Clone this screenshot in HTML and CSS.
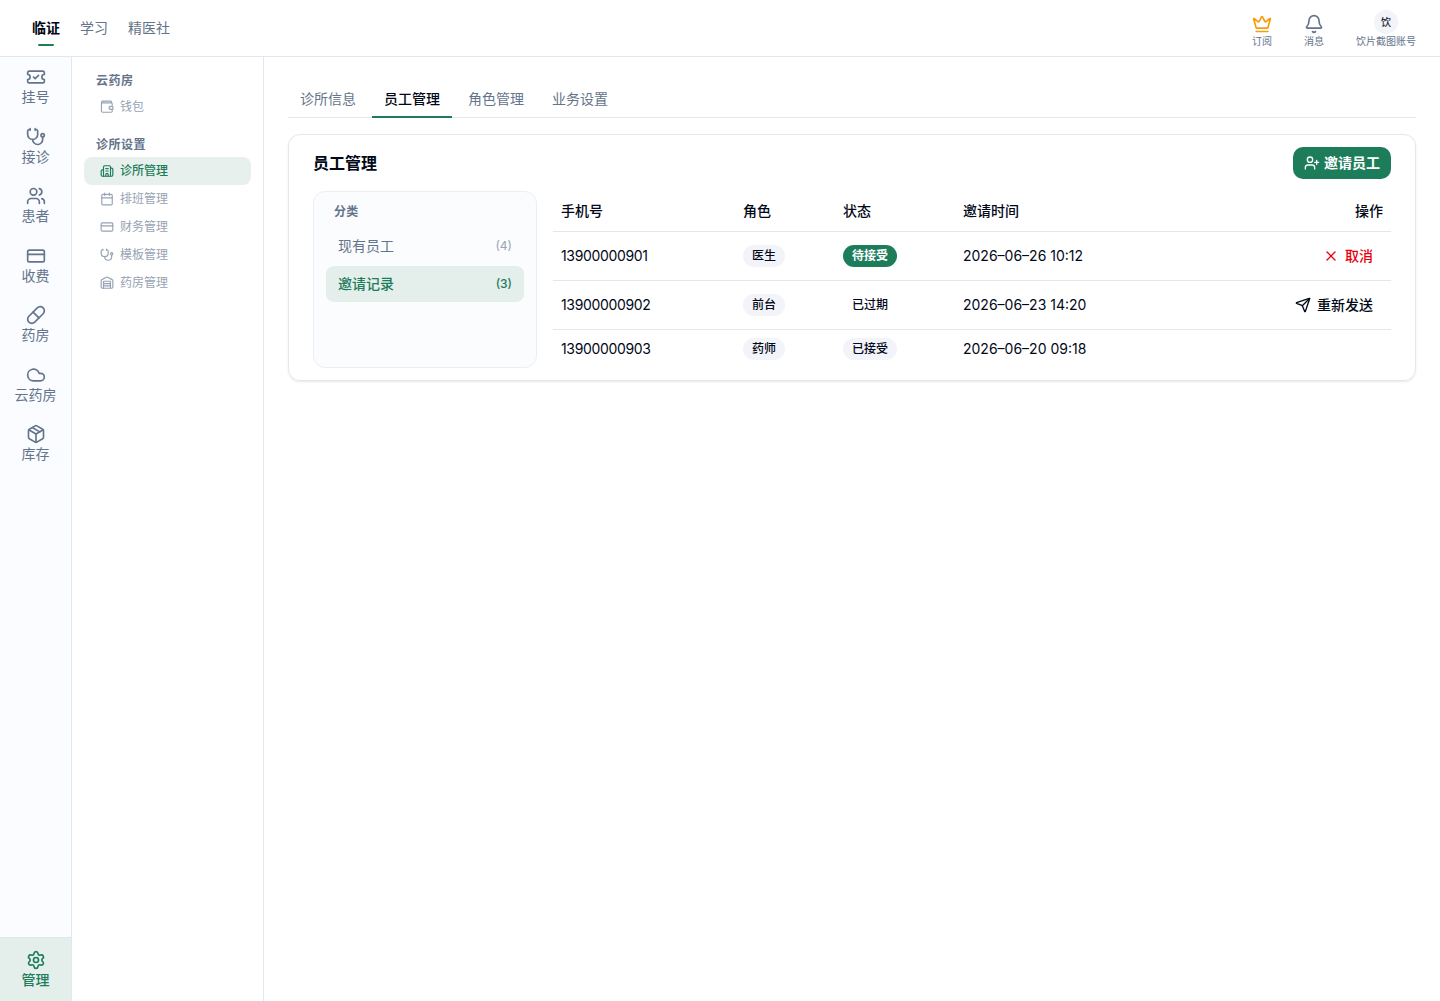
FILE: index.html
```html
<!DOCTYPE html>
<html lang="zh-CN">
<head>
    <meta charset="UTF-8">
    <meta name="viewport" content="width=device-width, initial-scale=1.0">
    <title>员工管理</title>
    <link rel="stylesheet" href="styles.css">
</head>
<body>
    <!-- Shared icons -->
    <svg class="sprite">
        <symbol id="ticket" viewBox="0 0 24 24"><path d="M2 9a3 3 0 0 1 0 6v2a2 2 0 0 0 2 2h16a2 2 0 0 0 2-2v-2a3 3 0 0 1 0-6V7a2 2 0 0 0-2-2H4a2 2 0 0 0-2 2Z"/><path d="m9 12 2 2 4-4"/></symbol>
        <symbol id="stethoscope" viewBox="0 0 24 24"><path d="M11 2v2M5 2v2M5 3H4a2 2 0 0 0-2 2v4a6 6 0 0 0 12 0V5a2 2 0 0 0-2-2h-1"/><path d="M8 15a6 6 0 0 0 12 0v-3"/><circle cx="20" cy="10" r="2"/></symbol>
        <symbol id="users" viewBox="0 0 24 24"><path d="M16 21v-2a4 4 0 0 0-4-4H6a4 4 0 0 0-4 4v2"/><circle cx="9" cy="7" r="4"/><path d="M22 21v-2a4 4 0 0 0-3-3.87M16 3.130a4 4 0 0 1 0 7.750"/></symbol>
        <symbol id="card" viewBox="0 0 24 24"><rect x="2" y="5" width="20" height="14" rx="2"/><path d="M2 10h20"/></symbol>
        <symbol id="pill" viewBox="0 0 24 24"><path d="m10.5 20.5 10-10a4.95 4.95 0 1 0-7-7l-10 10a4.95 4.95 0 1 0 7 7Z"/><path d="m8.5 8.5 7 7"/></symbol>
        <symbol id="cloud" viewBox="0 0 24 24"><path d="M17.5 19H9a7 7 0 1 1 6.71-9h1.79a4.5 4.5 0 1 1 0 9Z"/></symbol>
        <symbol id="package" viewBox="0 0 24 24"><path d="M11 21.73a2 2 0 0 0 2 0l7-4A2 2 0 0 0 21 16V8a2 2 0 0 0-1-1.73l-7-4a2 2 0 0 0-2 0l-7 4A2 2 0 0 0 3 8v8a2 2 0 0 0 1 1.73z"/><path d="M12 22V12"/><path d="M3.29 7 12 12l8.71-5"/><path d="m7.5 4.27 9 5.15"/></symbol>
        <symbol id="settings" viewBox="0 0 24 24"><path d="M9.671 4.136a2.34 2.34 0 0 1 4.659 0 2.34 2.34 0 0 0 3.319 1.915 2.34 2.34 0 0 1 2.33 4.033 2.34 2.34 0 0 0 0 3.831 2.34 2.34 0 0 1-2.33 4.033 2.34 2.34 0 0 0-3.319 1.915 2.34 2.34 0 0 1-4.659 0 2.34 2.34 0 0 0-3.32-1.915 2.34 2.34 0 0 1-2.33-4.033 2.34 2.34 0 0 0 0-3.831A2.34 2.34 0 0 1 6.35 6.051a2.34 2.34 0 0 0 3.319-1.915"/><circle cx="12" cy="12" r="3"/></symbol>
        <symbol id="wallet" viewBox="0 0 24 24"><path d="M17 14h.01"/><path d="M21 8.5V7a2 2 0 0 0-2-2H4.500a1.500 1.500 0 0 1 0-3H18a2 2 0 0 1 2 2v1M2.500 4v15a2 2 0 0 0 2 2H19a2 2 0 0 0 2-2v-1.500"/><path d="M22 11v5h-4a2.500 2.500 0 0 1 0-5z"/></symbol>
        <symbol id="building" viewBox="0 0 24 24"><path d="M10 12h4M10 8h4M14 21v-3a2 2 0 0 0-4 0v3"/><path d="M6 10H4a2 2 0 0 0-2 2v7a2 2 0 0 0 2 2h16a2 2 0 0 0 2-2V9a2 2 0 0 0-2-2h-2"/><path d="M6 21V5a2 2 0 0 1 2-2h8a2 2 0 0 1 2 2v16"/></symbol>
        <symbol id="calendar" viewBox="0 0 24 24"><path d="M8 2v4M16 2v4M3 10h18"/><rect x="3" y="4" width="18" height="18" rx="2"/></symbol>
        <symbol id="warehouse" viewBox="0 0 24 24"><path d="M18 21V10a1 1 0 0 0-1-1H7a1 1 0 0 0-1 1v11"/><path d="M22 19a2 2 0 0 1-2 2H4a2 2 0 0 1-2-2V8a2 2 0 0 1 1.132-1.803l7.950-3.974a2 2 0 0 1 1.837 0l7.948 3.974A2 2 0 0 1 22 8z"/><path d="M6 13h12M6 17h12"/></symbol>
        <symbol id="crown" viewBox="0 0 24 24"><path d="M11.562 3.266a.5.5 0 0 1 .876 0L15.390 8.870a1 1 0 0 0 1.516.294L21.183 5.500a.5.5 0 0 1 .798.519l-2.834 10.246a1 1 0 0 1-.956.734H5.810a1 1 0 0 1-.957-.734L2.020 6.020a.5.5 0 0 1 .798-.519l4.276 3.664a1 1 0 0 0 1.516-.294z"/><path d="M5 21h14"/></symbol>
        <symbol id="bell" viewBox="0 0 24 24"><path d="M10.268 21a2 2 0 0 0 3.464 0"/><path d="M3.262 15.326A1 1 0 0 0 4 17h16a1 1 0 0 0 .74-1.673C19.410 13.956 18 12.499 18 8A6 6 0 0 0 6 8c0 4.499-1.411 5.956-2.738 7.326"/></symbol>
        <symbol id="user-plus" viewBox="0 0 24 24"><path d="M16 21v-2a4 4 0 0 0-4-4H6a4 4 0 0 0-4 4v2"/><circle cx="9" cy="7" r="4"/><path d="M19 8v6M22 11h-6"/></symbol>
        <symbol id="close" viewBox="0 0 24 24"><path d="M18 6 6 18M6 6l12 12"/></symbol>
        <symbol id="send" viewBox="0 0 24 24"><path d="M14.536 21.686a.5.5 0 0 0 .937-.024l6.500-19a.496.496 0 0 0-.635-.635l-19 6.500a.5.5 0 0 0-.024.937l7.930 3.180a2 2 0 0 1 1.112 1.110z"/><path d="m21.854 2.147-10.940 10.939"/></symbol>
    </svg>

    <header class="topbar">
        <nav class="top-nav">
            <a class="active">临证</a>
            <a>学习</a>
            <a>精医社</a>
        </nav>
        <div class="top-actions">
            <a class="top-action"><svg class="icon crown"><use href="#crown"/></svg><span>订阅</span></a>
            <a class="top-action"><svg class="icon"><use href="#bell"/></svg><span>消息</span></a>
            <a class="top-action account"><span class="avatar">饮</span><span>饮片截图账号</span></a>
        </div>
    </header>

    <div class="layout">
        <nav class="rail">
            <a class="rail-item"><svg class="icon"><use href="#ticket"/></svg>挂号</a>
            <a class="rail-item"><svg class="icon"><use href="#stethoscope"/></svg>接诊</a>
            <a class="rail-item"><svg class="icon"><use href="#users"/></svg>患者</a>
            <a class="rail-item"><svg class="icon"><use href="#card"/></svg>收费</a>
            <a class="rail-item"><svg class="icon"><use href="#pill"/></svg>药房</a>
            <a class="rail-item"><svg class="icon"><use href="#cloud"/></svg>云药房</a>
            <a class="rail-item"><svg class="icon"><use href="#package"/></svg>库存</a>
            <a class="rail-item active"><svg class="icon"><use href="#settings"/></svg>管理</a>
        </nav>

        <aside class="sidebar">
            <section>
                <h2>云药房</h2>
                <a class="side-item"><svg class="icon"><use href="#wallet"/></svg>钱包</a>
            </section>
            <section>
                <h2>诊所设置</h2>
                <a class="side-item active"><svg class="icon"><use href="#building"/></svg>诊所管理</a>
                <a class="side-item"><svg class="icon"><use href="#calendar"/></svg>排班管理</a>
                <a class="side-item"><svg class="icon"><use href="#card"/></svg>财务管理</a>
                <a class="side-item"><svg class="icon"><use href="#stethoscope"/></svg>模板管理</a>
                <a class="side-item"><svg class="icon"><use href="#warehouse"/></svg>药房管理</a>
            </section>
        </aside>

        <main>
            <nav class="tabs">
                <a>诊所信息</a>
                <a class="active">员工管理</a>
                <a>角色管理</a>
                <a>业务设置</a>
            </nav>

            <section class="card">
                <div class="card-header">
                    <h1>员工管理</h1>
                    <button class="invite"><svg class="icon"><use href="#user-plus"/></svg>邀请员工</button>
                </div>
                <div class="card-body">
                    <div class="categories">
                        <h3>分类</h3>
                        <a class="category"><span>现有员工</span><span class="count">(4)</span></a>
                        <a class="category active"><span>邀请记录</span><span class="count">(3)</span></a>
                    </div>
                    <table>
                        <colgroup>
                            <col class="col-phone">
                            <col class="col-role">
                            <col class="col-status">
                            <col>
                            <col class="col-action">
                        </colgroup>
                        <thead>
                            <tr><th>手机号</th><th>角色</th><th>状态</th><th>邀请时间</th><th class="right">操作</th></tr>
                        </thead>
                        <tbody>
                            <tr>
                                <td class="phone">13900000901</td>
                                <td><span class="badge">医生</span></td>
                                <td><span class="badge primary">待接受</span></td>
                                <td>2026–06–26 10:12</td>
                                <td class="right"><button class="ghost danger"><svg class="icon"><use href="#close"/></svg>取消</button></td>
                            </tr>
                            <tr>
                                <td class="phone">13900000902</td>
                                <td><span class="badge">前台</span></td>
                                <td><span class="badge plain">已过期</span></td>
                                <td>2026–06–23 14:20</td>
                                <td class="right"><button class="ghost"><svg class="icon"><use href="#send"/></svg>重新发送</button></td>
                            </tr>
                            <tr>
                                <td class="phone">13900000903</td>
                                <td><span class="badge">药师</span></td>
                                <td><span class="badge">已接受</span></td>
                                <td>2026–06–20 09:18</td>
                                <td></td>
                            </tr>
                        </tbody>
                    </table>
                </div>
            </section>
        </main>
    </div>
</body>
</html>
```
FILE: styles.css
```css
* {
    box-sizing: border-box;
}

body {
    margin: 0;
    height: 100vh;
    display: flex;
    flex-direction: column;
    overflow: hidden;
    font-family: Inter, "Noto Sans CJK SC", sans-serif;
    font-size: 14px;
    line-height: 20px;
    color: #020817;
    background: #fff;
}

h1, h2, h3 {
    margin: 0;
    font-weight: 600;
}

button {
    font: inherit;
    border: none;
    cursor: pointer;
}

.sprite {
    display: none;
}

.icon {
    width: 20px;
    height: 20px;
    flex-shrink: 0;
    fill: none;
    stroke: currentColor;
    stroke-width: 2;
    stroke-linecap: round;
    stroke-linejoin: round;
}

/* Top bar */
.topbar {
    height: 57px;
    flex-shrink: 0;
    display: flex;
    justify-content: space-between;
    padding: 0 24px 0 32px;
    border-bottom: 1px solid #e2e8f0;
}

.top-nav {
    display: flex;
    align-items: center;
    gap: 20px;
    color: #64748b;
}

.top-nav .active {
    position: relative;
    color: #020817;
    font-weight: 600;
}

.top-nav .active::after {
    content: "";
    position: absolute;
    left: 50%;
    bottom: -8px;
    width: 16px;
    height: 2px;
    margin-left: -8px;
    border-radius: 2px;
    background: #1d7d5b;
}

.top-actions {
    display: flex;
    gap: 32px;
    padding-top: 14px;
    font-size: 10px;
    line-height: 15px;
    color: #64748b;
}

.top-action {
    display: flex;
    flex-direction: column;
    align-items: center;
}

.account {
    margin-top: -4px;
}

.crown {
    color: #f99c0b;
}

.avatar {
    width: 24px;
    height: 24px;
    border-radius: 50%;
    background: #f2f4f9;
    color: #1e293b;
    font-weight: 500;
    line-height: 24px;
    text-align: center;
}

/* Page columns */
.layout {
    flex: 1;
    display: flex;
    min-height: 0;
}

.rail {
    width: 72px;
    flex-shrink: 0;
    display: flex;
    flex-direction: column;
    border-right: 1px solid #e2e8f0;
    background: #fafcff;
}

.rail-item {
    display: flex;
    flex-direction: column;
    align-items: center;
    gap: 1px;
    padding: 10px 0 11px;
    line-height: 17.5px;
    color: #64748b;
}

.rail-item.active {
    height: 64px;
    margin-top: auto;
    padding-top: 12px;
    border-top: 1px solid #e0e9ea;
    background: #e4eeeb;
    color: #1d7d5b;
    font-weight: 500;
}

.sidebar {
    width: 192px;
    flex-shrink: 0;
    padding: 12px;
    border-right: 1px solid #e2e8f0;
}

.sidebar section {
    margin-bottom: 12px;
}

.sidebar h2 {
    padding-left: 12px;
    font-size: 12px;
    line-height: 24px;
    letter-spacing: 0.5px;
    color: #64748b;
}

.side-item {
    display: flex;
    align-items: center;
    gap: 6px;
    height: 28px;
    padding-left: 16px;
    border-radius: 8px;
    font-size: 12px;
    color: #97a3b5;
}

.side-item .icon {
    width: 14px;
    height: 14px;
}

.side-item.active {
    background: #e8f0ed;
    color: #1d7d5b;
    font-weight: 500;
}

/* Main content */
main {
    flex: 1;
    padding: 24px;
}

.tabs {
    display: flex;
    gap: 4px;
    height: 37px;
    margin-bottom: 16px;
    border-bottom: 1px solid #e2e8f0;
}

.tabs a {
    height: 37px;
    padding: 8px 12px 0;
    color: #64748b;
}

.tabs .active {
    border-bottom: 2px solid #1d7d5b;
    color: #020817;
    font-weight: 500;
}

.card {
    padding: 12px 24px;
    border: 1px solid #e2e8f0;
    border-radius: 12px;
    box-shadow: 0 1px 2px rgba(15, 23, 42, 0.1);
}

.card-header {
    display: flex;
    align-items: center;
    justify-content: space-between;
    margin-bottom: 12px;
}

h1 {
    font-size: 16px;
    line-height: 24px;
}

.invite {
    display: flex;
    align-items: center;
    gap: 4px;
    height: 32px;
    padding: 0 11px;
    border-radius: 10px;
    background: #1d7d5b;
    color: #fff;
    font-weight: 600;
}

.invite .icon,
.ghost .icon {
    width: 16px;
    height: 16px;
}

.card-body {
    display: flex;
    gap: 16px;
}

.categories {
    width: 224px;
    flex-shrink: 0;
    padding: 8px 12px;
    border: 1px solid #ebeff5;
    border-radius: 12px;
    background: #fbfcfe;
}

.categories h3 {
    padding: 4px 8px 8px;
    font-size: 12px;
    line-height: 16px;
    letter-spacing: 0.3px;
    color: #64748b;
}

.category {
    display: flex;
    align-items: center;
    justify-content: space-between;
    height: 36px;
    margin-bottom: 2px;
    padding: 0 12px;
    border-radius: 8px;
    color: #64748b;
}

.count {
    font-size: 12px;
    color: #97a3b5;
}

.category.active {
    background: #e4eeeb;
    font-weight: 500;
}

.category.active,
.category.active .count {
    color: #1d7d5b;
}

table {
    flex: 1;
    table-layout: fixed;
    border-collapse: separate;
    border-spacing: 0;
    text-align: left;
}

.col-phone {
    width: 182px;
}

.col-role {
    width: 100px;
}

.col-status {
    width: 120px;
}

.col-action {
    width: 180px;
}

th {
    height: 41px;
    padding: 0 8px;
    border-bottom: 1px solid #e2e8f0;
    font-weight: 500;
}

td {
    height: 49px;
    padding: 0 8px;
    border-bottom: 1px solid #e2e8f0;
}

tr:last-child td {
    height: 38px;
    border-bottom: none;
}

.phone {
    letter-spacing: -0.35px;
}

.right {
    text-align: right;
}

.badge {
    display: inline-block;
    padding: 3px 9px;
    border-radius: 11px;
    background: #f2f4f9;
    font-size: 12px;
    line-height: 16px;
    font-weight: 500;
    vertical-align: middle;
}

.badge.primary {
    background: #1d7d5b;
    color: #fff;
    font-weight: 600;
}

.badge.plain {
    background: none;
}

.ghost {
    display: inline-flex;
    align-items: center;
    gap: 6px;
    height: 32px;
    padding: 0 10px;
    background: none;
    color: #020817;
    font-weight: 500;
    vertical-align: middle;
}

.ghost.danger {
    color: #e7000b;
}
```
